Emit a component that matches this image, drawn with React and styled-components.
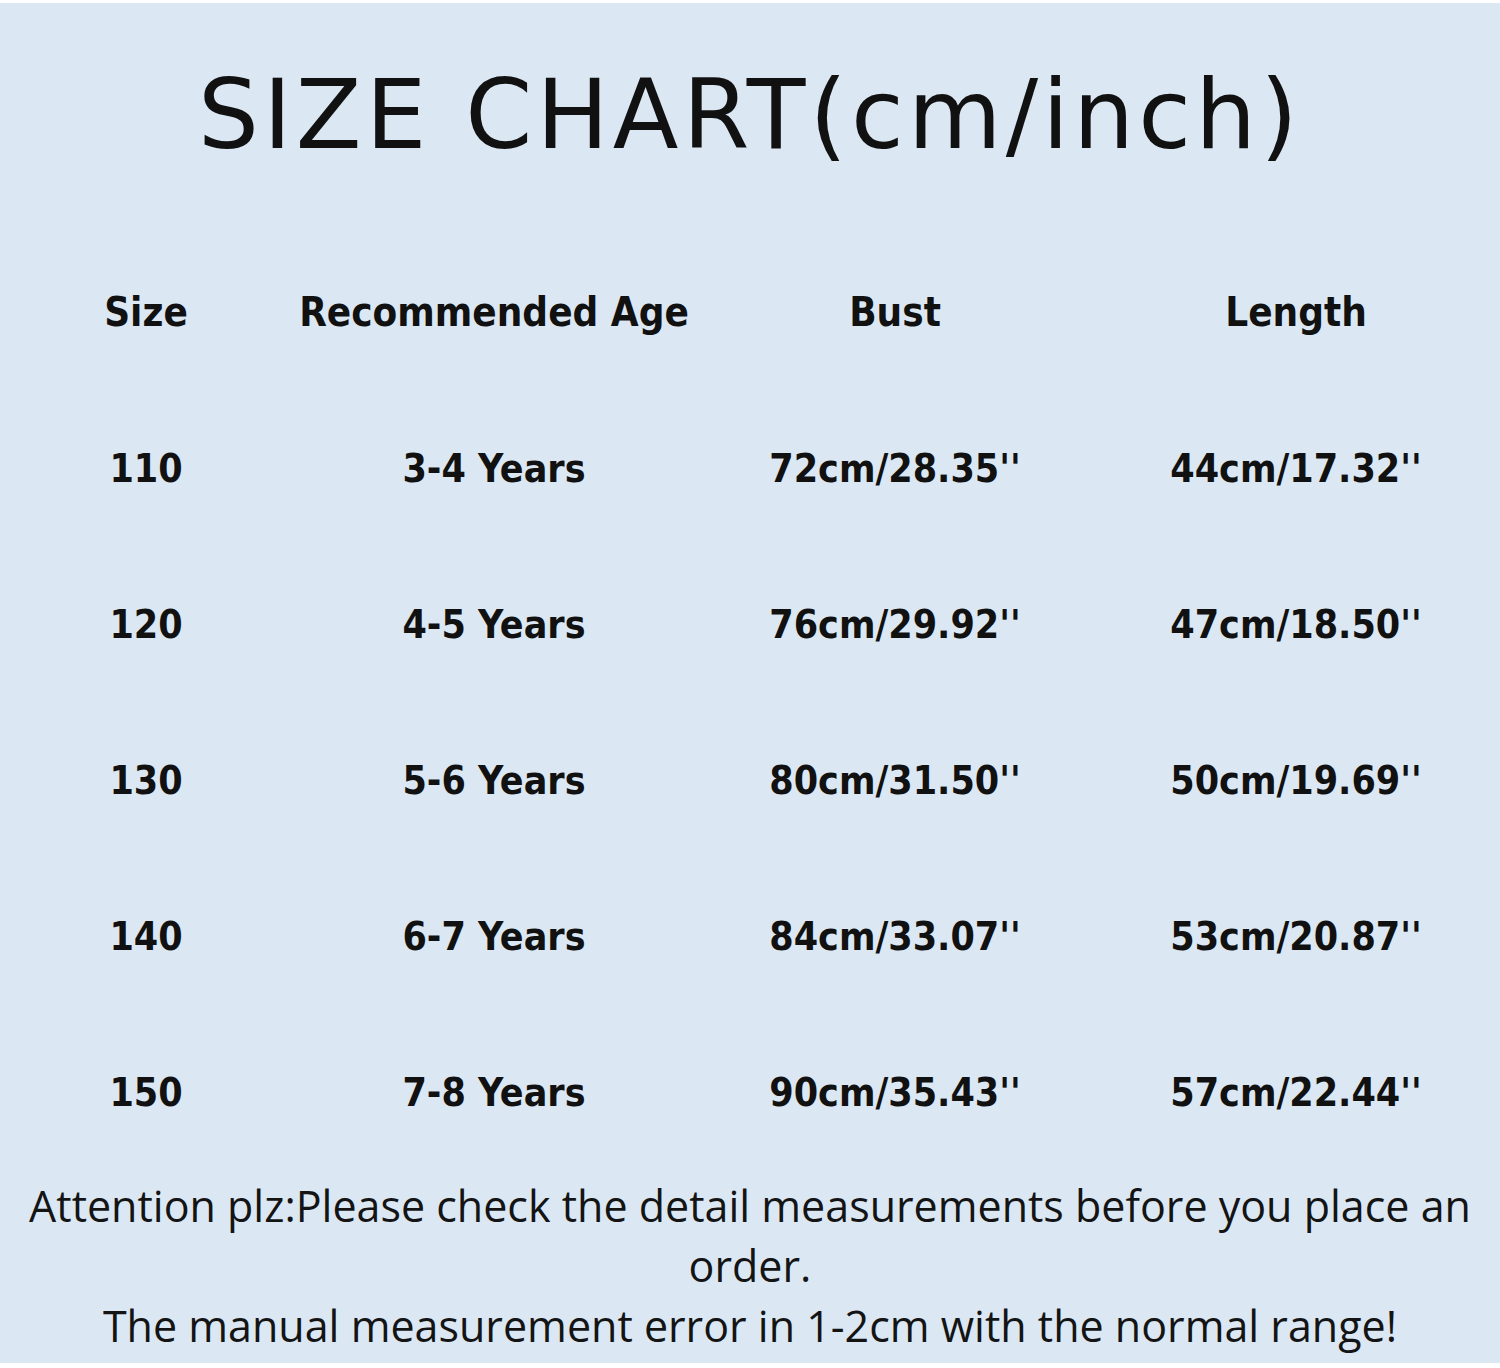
import React from 'react';
import styled, { createGlobalStyle } from 'styled-components';

const GlobalStyle = createGlobalStyle`
  html, body {
    margin: 0;
    padding: 0;
    background: #ffffff;
  }
`;

const rows = [
  ['110', '3-4 Years', "72cm/28.35''", "44cm/17.32''"],
  ['120', '4-5 Years', "76cm/29.92''", "47cm/18.50''"],
  ['130', '5-6 Years', "80cm/31.50''", "50cm/19.69''"],
  ['140', '6-7 Years', "84cm/33.07''", "53cm/20.87''"],
  ['150', '7-8 Years', "90cm/35.43''", "57cm/22.44''"],
];

const headers = ['Size', 'Recommended Age', 'Bust', 'Length'];

const App = () => (
  <>
    <GlobalStyle />
    <Frame>
      <Title>SIZE CHART(cm/inch)</Title>
      <Chart>
        {headers.map((h) => (
          <HeadCell key={h}>{h}</HeadCell>
        ))}
        {rows.map((row) =>
          row.map((value, i) => <Cell key={row[0] + i}>{value}</Cell>)
        )}
      </Chart>
      <Note>
        Attention plz:Please check the detail measurements before you place an
        <br />
        order.
        <br />
        The manual measurement error in 1-2cm with the normal range!
      </Note>
    </Frame>
  </>
);

export default App;

const Frame = styled.div`
  margin-top: 3px;
  width: 1500px;
  height: 1360px;
  background: #dbe8f4;
  color: #111111;
  overflow: hidden;
`;

const Title = styled.h1`
  margin: 0;
  height: 231px;
  line-height: 224px;
  text-align: center;
  font-family: "DejaVu Sans", sans-serif;
  font-weight: 400;
  font-size: 96px;
  letter-spacing: 4.2px;
`;

const Chart = styled.div`
  display: grid;
  grid-template-columns: 292px 404px 398px 404px;
  grid-auto-rows: 156px;
  align-items: center;
  justify-items: center;
  font-family: "DejaVu Sans Condensed", "DejaVu Sans", sans-serif;
  font-stretch: condensed;
  font-weight: 700;
`;

const HeadCell = styled.div`
  font-size: 40px;
`;

const Cell = styled.div`
  font-size: 39px;
`;

const Note = styled.p`
  margin: 6px 0 0;
  text-align: center;
  font-family: "Open Sans", sans-serif;
  font-size: 43px;
  line-height: 60px;
  color: #141414;
`;
